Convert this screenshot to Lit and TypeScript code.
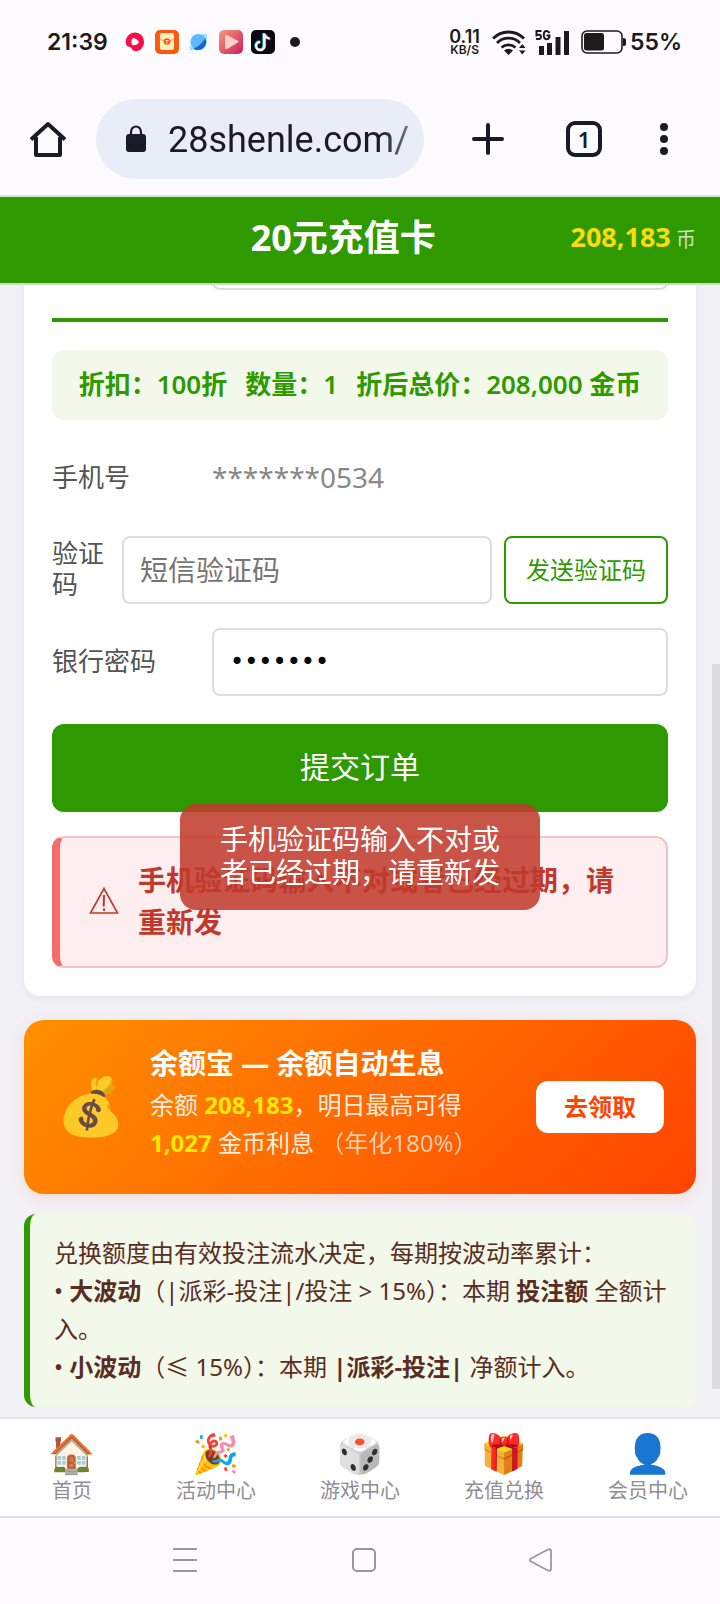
import { LitElement, html, css } from "lit";
import { customElement } from "lit/decorators.js";

const cjk = css`"Noto Sans", "Noto Sans CJK SC", "Noto Color Emoji", sans-serif`;

const base = css`
  * { box-sizing: border-box; }
  button, input { font: inherit; color: inherit; margin: 0; }
  button { border: 0; background: none; padding: 0; cursor: pointer; }
  a { color: inherit; text-decoration: none; }
  svg { display: block; flex: none; }
`;

@customElement("status-bar")
class StatusBar extends LitElement {
  static styles = [base, css`
    :host { display: flex; align-items: center; height: 83px; padding: 0 38px 0 47px; color: #1b1b1b; font-family: Inter, sans-serif; font-weight: 600; }
    .time { font-size: 23px; line-height: 28px; width: 76px; }
    .apps { display: flex; gap: 8px; align-items: center; }
    .right { margin-left: auto; display: flex; align-items: center; }
    .speed { display: flex; flex-direction: column; align-items: center; font-size: 18px; line-height: 15px; margin-right: 12px; }
    .speed small { font-size: 12px; line-height: 11px; }
    .wifi { margin-right: 9px; }
    .cell { margin-right: 11px; }
    .pct { font-size: 23px; line-height: 28px; margin-left: 4px; }
  `];
  render() {
    return html`
      <span class="time">21:39</span>
      <div class="apps">
        <svg width="24" height="24" viewBox="0 0 24 24"><rect width="24" height="24" rx="5" fill="#fff"/><path d="M12 2.500a9 9 0 0 1 9 9.500c0 6-5 10-9.500 9-2-.500-2.500-2-3.500-3.500-1.500-1-4-.5-5-3.500C1.500 7 7 2.500 12 2.500z" fill="#fb0d4c"/><path d="M9.500 8.500c1.500-1 6 1.500 6.300 3.300.2 1.900-3.800 4-5.800 3.500-2-.500-2-6-.5-6.800z" fill="#fff"/></svg>
        <svg width="24" height="24" viewBox="0 0 24 24"><rect width="24" height="24" rx="5" fill="#fb5a10"/><rect x="5" y="3" width="14" height="17" rx="2" fill="#fff0bf"/><path d="M5 9l6 3h2l6-3" fill="none" stroke="#f2a65b" stroke-width="1.200"/><circle cx="12" cy="11.500" r="3.300" fill="#fb5a10"/><path d="M10.500 10.500h3M12 10.500v3" stroke="#ffe3a3" fill="none"/></svg>
        <svg width="24" height="24" viewBox="0 0 24 24"><rect width="24" height="24" rx="5" fill="#f7fafc"/><circle cx="11.500" cy="12" r="8" fill="#5db8fb"/><path d="M3 20v-5l5 5zM20 4v5l-5-5z" fill="#a5d8fd"/><path d="M18.500 8c2.500 6-1.500 12-7.500 12-2 0-3.500-.5-4.500-1.500C11 17 15.500 13 18.500 8z" fill="#1266d8"/></svg>
        <svg width="24" height="24" viewBox="0 0 24 24"><defs><linearGradient id="p" x2="1" y2="1"><stop stop-color="#f69a7c"/><stop offset="1" stop-color="#cf1d5c"/></linearGradient></defs><rect width="24" height="24" rx="5" fill="url(#p)"/><path d="M6 6.500C6 5 7 4.500 8.500 5.300l10 5.200c1.300.700 1.300 1.500 0 2.200l-10 6C7 19.500 6 19 6 17.500z" fill="#fccfc4"/></svg>
        <svg width="24" height="24" viewBox="0 0 24 24"><rect width="24" height="24" rx="5" fill="#0b0a14"/><g fill="none" stroke-width="2.300"><path d="M12.500 3v12.500a4 4 0 1 1-4-4" stroke="#32e0dc"/><path d="M14 4.500v12.300a4 4 0 0 1-6.500 2.300M14.500 4.500c.5 3 2.500 4.300 5 4.500" stroke="#f43b62"/><path d="M13.300 3.500v12.500a4 4 0 1 1-4-4M13.300 3.500c.5 3 2.500 4.700 5.200 4.900" stroke="#fff"/></g></svg>
        <svg width="24" height="24" viewBox="0 0 24 24"><circle cx="12" cy="12" r="5" fill="#1b1b1b"/></svg>
      </div>
      <div class="right">
        <span class="speed">0.11<small>KB/S</small></span>
        <svg class="wifi" width="34" height="26" viewBox="0 0 34 26"><g fill="none" stroke="#1b1b1b" stroke-width="3"><path d="M1 9.500a21.500 21.500 0 0 1 31 0"/><path d="M5 14a16 16 0 0 1 23 0" stroke-width="2.800"/><path d="M9.500 18.500a10.500 10.500 0 0 1 14 0" stroke-width="2.800"/></g><path d="M12 21.500q4.500-3.500 9 0L16.500 26z" fill="#1b1b1b"/><path d="M27 19l3.300-4 3.200 4zM27 21.500h6.500l-3.200 4z" fill="#1b1b1b"/></svg>
        <svg class="cell" width="35" height="26" viewBox="0 0 35 26" fill="#1b1b1b"><rect x="4" y="17" width="5" height="9"/><rect x="12" y="14" width="5" height="12"/><rect x="20.500" y="8" width="5" height="18"/><rect x="29" y="2" width="5" height="24"/><g fill="none" stroke="#1b1b1b" stroke-width="2"><path d="M6.500 2H1.500v4.200q4-1.500 4.500 1.300 0 3.500-5 2.300M14.500 4Q13.500 1.800 11.300 1.900 8.800 2 8.800 6t2.600 4.200q3 0 3.100-3.700h-3"/></g></svg>
        <svg width="45" height="24" viewBox="0 0 45 24"><rect x="1" y="1" width="40" height="22" rx="5" fill="none" stroke="#1b1b1b" stroke-width="1.600"/><rect x="3" y="3" width="20" height="17.500" rx="2.500" fill="#1b1b1b"/><path d="M42 8q3 0 3 2v4q0 2-3 2z" fill="#1b1b1b"/></svg>
        <span class="pct">55%</span>
      </div>`;
  }
}

@customElement("browser-bar")
class BrowserBar extends LitElement {
  static styles = [base, css`
    :host { display: flex; align-items: center; height: 112px; padding: 0 32px 0 24px; color: #191c28; }
    .icon { width: 48px; height: 48px; display: grid; place-items: center; }
    .pill { flex: 1; min-width: 0; height: 80px; border-radius: 40px; background: #e8edf8; margin: 0 40px 0 24px; padding: 0 16px 0 30px; display: flex; align-items: center; gap: 22px; }
    .url { flex: 1; min-width: 0; border: 0; background: none; padding: 2px 0 0; outline: none; font-family: Roboto, sans-serif; font-size: 36px; line-height: 44px; -webkit-mask-image: linear-gradient(to right, #000 88%, rgba(0, 0, 0, 0.6)); }
    .tabs { margin: 0 32px 0 48px; }
    .count { width: 36px; height: 36px; border: 4px solid #191c28; border-radius: 9px; display: grid; place-items: center; font: 600 22px/24px "Noto Sans", sans-serif; }
  `];
  render() {
    return html`
      <button class="icon" aria-label="主页"><svg width="36" height="36" viewBox="0 0 36 36" fill="none" stroke="#191c28" stroke-width="4"><path d="M1 18.500L18 3l17 15.500M6 16v18h24V16" stroke-linejoin="round"/></svg></button>
      <div class="pill">
        <svg width="20" height="28" viewBox="0 0 20 28"><path d="M5 11V7a5 5.500 0 0 1 10 0v4" fill="none" stroke="#191c28" stroke-width="2.200"/><rect y="9" width="20" height="18" rx="3" fill="#191c28"/></svg>
        <input class="url" aria-label="网址" value="28shenle.com/" />
      </div>
      <button class="icon" aria-label="新标签页"><svg width="32" height="32" viewBox="0 0 32 32"><path d="M16 2v28M2 16h28" stroke="#191c28" stroke-width="4" stroke-linecap="round"/></svg></button>
      <button class="icon tabs" aria-label="标签页"><span class="count">1</span></button>
      <button class="icon" aria-label="菜单"><svg width="8" height="32" viewBox="0 0 8 32" fill="#191c28"><circle cx="4" cy="4" r="4"/><circle cx="4" cy="16" r="4"/><circle cx="4" cy="28" r="4"/></svg></button>`;
  }
}

@customElement("order-form")
class OrderForm extends LitElement {
  static styles = [base, css`
    :host { display: block; background: #fff; border-radius: 16px; padding: 28px; box-shadow: 0 2px 8px rgba(0, 0, 0, 0.05); font-size: 26px; line-height: 31px; color: #555; }
    .row { display: flex; align-items: center; min-height: 68px; margin-bottom: 24px; gap: 12px; }
    .label { flex: 0 0 148px; padding-bottom: 2px; }
    .label.narrow { flex-basis: 58px; }
    .phone { font-size: 28px; color: #888; padding-bottom: 2px; }
    .input { flex: 1; min-width: 0; height: 68px; border: 2px solid #ddd; border-radius: 8px; padding: 0 16px; background: #fff; font-size: 28px; color: #000; outline: none; }
    .input::placeholder { color: #757575; }
    .secret { font-family: "DejaVu Sans", sans-serif; font-size: 24px; }
    .send { height: 68px; border: 2px solid #2f9900; border-radius: 8px; padding: 0 20px 2px; color: #2f9900; font-size: 24px; white-space: nowrap; }
    .rule { border: 0; border-top: 4px solid #2f9900; margin: 28px 0; }
    .total { display: flex; justify-content: center; gap: 18px; background: #f2f8ea; border-radius: 12px; padding: 17px 12px 19px; line-height: 34px; color: #2f9900; font-weight: 600; margin-bottom: 24px; white-space: nowrap; }
    .submit { display: block; width: 100%; height: 88px; margin: 28px 0 24px; padding-bottom: 4px; background: #2f9900; color: #fff; border-radius: 12px; font-size: 30px; }
    .alert { display: flex; align-items: center; gap: 18px; padding: 21px 28px 23px; border: 2px solid #f5c2c4; border-left: 8px solid #f56c6c; border-radius: 12px; background: #ffeef0; color: #c0392b; font-size: 28px; line-height: 42px; font-weight: 700; }
  `];
  render() {
    return html`
      <div class="row">
        <span class="label"></span>
        <input class="input" aria-label="数量" />
      </div>
      <hr class="rule" />
      <div class="total"><span>折扣：100折</span><span>数量：1</span><span>折后总价：208,000 金币</span></div>
      <div class="row"><span class="label">手机号</span><span class="phone">*******0534</span></div>
      <div class="row">
        <label class="label narrow" for="code">验证码</label>
        <input class="input" id="code" placeholder="短信验证码" />
        <button class="send">发送验证码</button>
      </div>
      <div class="row">
        <label class="label" for="pwd">银行密码</label>
        <input class="input secret" id="pwd" type="password" value="1234567" />
      </div>
      <button class="submit">提交订单</button>
      <div class="alert" role="alert">
        <svg width="32" height="32" viewBox="0 0 32 32" fill="none" stroke="#c0392b" stroke-width="1.600"><path d="M16 3.500L29.500 28h-27z"/><path d="M16 10l-.3 11.500M16 23.500v2.500" stroke-width="2"/></svg>
        <span>手机验证码输入不对或者已经过期，请重新发</span>
      </div>`;
  }
}

const tabs: [string, string][] = [
  ["🏠", "首页"], ["🎉", "活动中心"], ["🎲", "游戏中心"], ["🎁", "充值兑换"], ["👤", "会员中心"],
];

@customElement("app-root")
class AppRoot extends LitElement {
  static styles = [base, css`
    :host { display: flex; flex-direction: column; height: 100vh; background: #fdfbff; font-family: ${cjk}; overflow: hidden; }
    .page { position: relative; flex: 1; min-height: 0; display: flex; flex-direction: column; background: #f2f1f6; border-top: 2px solid #d5ead2; }
    .head { display: flex; justify-content: space-between; align-items: center; height: 88px; flex: none; padding: 0 24px 4px; background: #2f9900; color: #fff; border-bottom: 2px solid #c6dcbc; position: relative; }
    .side { width: 92px; }
    .title { margin: 0; font-size: 36px; line-height: 44px; font-weight: 700; }
    .coins { font-size: 20px; color: rgba(255, 255, 255, 0.75); line-height: 34px; }
    .coins b { font-size: 27px; color: #fadc0a; }
    .scroll { flex: 1; min-height: 0; overflow: hidden; padding: 0 24px; }
    .form { margin: -91px 0 24px; }
    .bar { position: absolute; right: 0; height: 55%; bottom: 127px; width: 8px; background: #dcdbe0; }
    .promo { display: flex; align-items: center; gap: 24px; padding: 28px 32px; border-radius: 20px; background: linear-gradient(135deg, #ff9000, #ff4400); color: #fff; box-shadow: 0 4px 16px rgba(255, 80, 0, 0.12); margin-bottom: 20px; }
    .bag { font-size: 56px; line-height: 70px; width: 70px; padding-bottom: 6px; }
    .text { flex: 1; font-size: 24px; line-height: 38px; color: rgba(255, 255, 255, 0.9); padding-bottom: 4px; }
    .text h2 { margin: 0 0 8px; font-size: 28px; line-height: 30px; color: #fff; }
    .text p { margin: 0; }
    .text b { color: #ffea00; }
    .rate { opacity: 0.75; }
    .claim { width: 128px; height: 52px; padding-bottom: 4px; border-radius: 12px; background: #fff; color: #ff4400; font-weight: 700; font-size: 24px; }
    .note { border-left: 6px solid #2f9900; border-radius: 12px; background: #f2f8ea; color: #5a2d22; padding: 20px 24px 21px; font-size: 24px; line-height: 38px; }
    .note p { margin: 0; }
    .nav { display: flex; flex: none; height: 99px; background: #fff; border-top: 2px solid #e4e3e6; position: relative; }
    .tab { flex: 1; display: flex; flex-direction: column; align-items: center; gap: 2px; color: #8e8e93; font-size: 20px; line-height: 28px; padding-top: 10px; }
    .emoji { font-size: 38px; line-height: 46px; }
    .toast { position: absolute; left: 50%; top: 50%; transform: translate(-50%, -50%); width: 50%; padding: 19px 40px 21px; border-radius: 16px; background: rgba(192, 57, 43, 0.86); color: #fff; font-size: 28px; line-height: 33px; }
    .system { display: flex; flex: none; height: 88px; border-top: 2px solid #dce0ee; align-items: center; justify-content: space-between; padding: 0 164px 2px 168px; }
  `];
  render() {
    return html`
      <status-bar></status-bar>
      <browser-bar></browser-bar>
      <div class="page">
        <header class="head"><span class="side"></span><h1 class="title">20元充值卡</h1><span class="coins"><b>208,183</b> 币</span></header>
        <div class="scroll">
          <order-form class="form"></order-form>
          <section class="promo">
            <span class="bag">💰</span>
            <div class="text">
              <h2>余额宝 — 余额自动生息</h2>
              <p>余额 <b>208,183</b>，明日最高可得<br /><b>1,027</b> 金币利息 <span class="rate">（年化180%）</span></p>
            </div>
            <button class="claim">去领取</button>
          </section>
          <section class="note">
            <p>兑换额度由有效投注流水决定，每期按波动率累计：</p>
            <p>• <b>大波动</b>（|派彩-投注|/投注 &gt; 15%）：本期 <b>投注额</b> 全额计入。</p>
            <p>• <b>小波动</b>（≤ 15%）：本期 <b>|派彩-投注|</b> 净额计入。</p>
          </section>
        </div>
        <nav class="nav">${tabs.map(([e, t]) => html`<a class="tab" href="#"><span class="emoji">${e}</span>${t}</a>`)}</nav>
        <div class="bar"></div>
        <div class="toast" role="status">手机验证码输入不对或者已经过期，请重新发</div>
      </div>
      <div class="system">
        <button aria-label="最近任务"><svg width="34" height="30" viewBox="0 0 34 30"><path d="M5 4h24M5 15h24M5 26h24" stroke="#98979b" stroke-width="2"/></svg></button>
        <button aria-label="主屏幕"><svg width="30" height="30" viewBox="0 0 30 30"><rect x="4" y="4" width="22" height="22" rx="4" fill="none" stroke="#98979b" stroke-width="2"/></svg></button>
        <button aria-label="返回"><svg width="30" height="30" viewBox="0 0 30 30"><path d="M5 13.500L22 4.500q3-1 3 2v17q0 3-3 2L5 16.500q-2-1.500 0-3z" fill="none" stroke="#98979b" stroke-width="1.800"/></svg></button>
      </div>`;
  }
}
